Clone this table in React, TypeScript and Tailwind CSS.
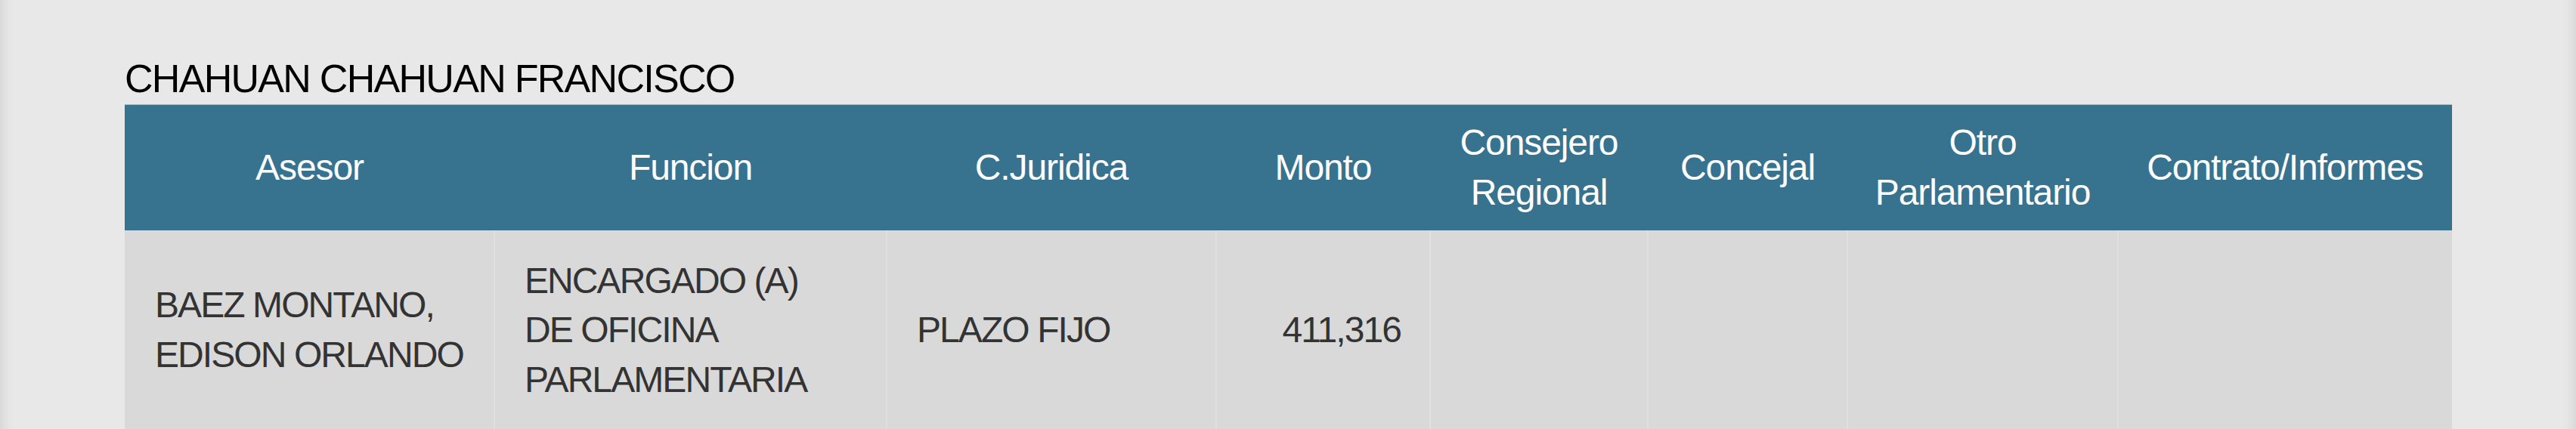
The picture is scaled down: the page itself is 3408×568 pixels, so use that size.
const columns = [
  { label: ["Asesor"], width: "w-[489px]" },
  { label: ["Funcion"], width: "w-[519px]" },
  { label: ["C.Juridica"], width: "w-[436px]" },
  { label: ["Monto"], width: "w-[283px]" },
  { label: ["Consejero", "Regional"], width: "w-[288px]" },
  { label: ["Concejal"], width: "w-[264px]" },
  { label: ["Otro", "Parlamentario"], width: "w-[358px]" },
  { label: ["Contrato/Informes"], width: "w-[442px]" },
];

const rows = [
  {
    asesor: ["BAEZ MONTANO,", "EDISON ORLANDO"],
    funcion: ["ENCARGADO (A)", "DE OFICINA", "PARLAMENTARIA"],
    juridica: "PLAZO FIJO",
    monto: "411,316",
    consejero: "",
    concejal: "",
    otro: "",
    contrato: "",
  },
];

export default function App() {
  return (
    <div className="h-[568px] overflow-hidden bg-[#e8e8e8] font-[family-name:'Liberation_Sans',Arial,sans-serif] shadow-[inset_20px_0_16px_-16px_rgba(0,0,0,0.09),inset_-20px_0_16px_-16px_rgba(0,0,0,0.09)]">
      <div className="pl-[165px] pt-[75px]">
        {/* Senator name */}
        <h3 className="text-[52px] leading-[58px] tracking-[-0.033em] text-black mb-[5px]">
          CHAHUAN CHAHUAN FRANCISCO
        </h3>

        <table className="table-fixed border-collapse w-[3079px]">
          <colgroup>
            {columns.map((c) => (
              <col key={c.label.join(" ")} className={c.width} />
            ))}
          </colgroup>
          <thead>
            <tr className="bg-[#37728f] border-t border-[#a3b9c4]">
              {columns.map((c) => (
                <th
                  key={c.label.join(" ")}
                  className="h-[166px] px-2 text-center align-middle font-normal text-white text-[48px] leading-[66px] tracking-[-0.023em]"
                >
                  {c.label.map((l) => (
                    <div key={l}>{l}</div>
                  ))}
                </th>
              ))}
            </tr>
          </thead>
          <tbody>
            {rows.map((r, i) => (
              <tr key={i} className="bg-[#d9d9d9] text-[#333333] text-[48px] leading-[65.5px] tracking-[-0.04em]">
                <td className="py-[34px] px-[40px] align-middle border-r-2 border-[#e0e0e0]">
                  {r.asesor.map((l) => (
                    <div key={l}>{l}</div>
                  ))}
                </td>
                <td className="py-[34px] px-[39px] align-middle border-r-2 border-[#e0e0e0]">
                  {r.funcion.map((l) => (
                    <div key={l}>{l}</div>
                  ))}
                </td>
                <td className="py-[34px] px-[39px] align-middle border-r-2 border-[#e0e0e0]">{r.juridica}</td>
                <td className="py-[34px] px-[38px] align-middle text-right border-r-2 border-[#e0e0e0]">{r.monto}</td>
                <td className="py-[34px] px-[39px] align-middle border-r-2 border-[#e0e0e0]">{r.consejero}</td>
                <td className="py-[34px] px-[39px] align-middle border-r-2 border-[#e0e0e0]">{r.concejal}</td>
                <td className="py-[34px] px-[39px] align-middle border-r-2 border-[#e0e0e0]">{r.otro}</td>
                <td className="py-[34px] px-[39px] align-middle">{r.contrato}</td>
              </tr>
            ))}
          </tbody>
        </table>
      </div>
    </div>
  );
}
